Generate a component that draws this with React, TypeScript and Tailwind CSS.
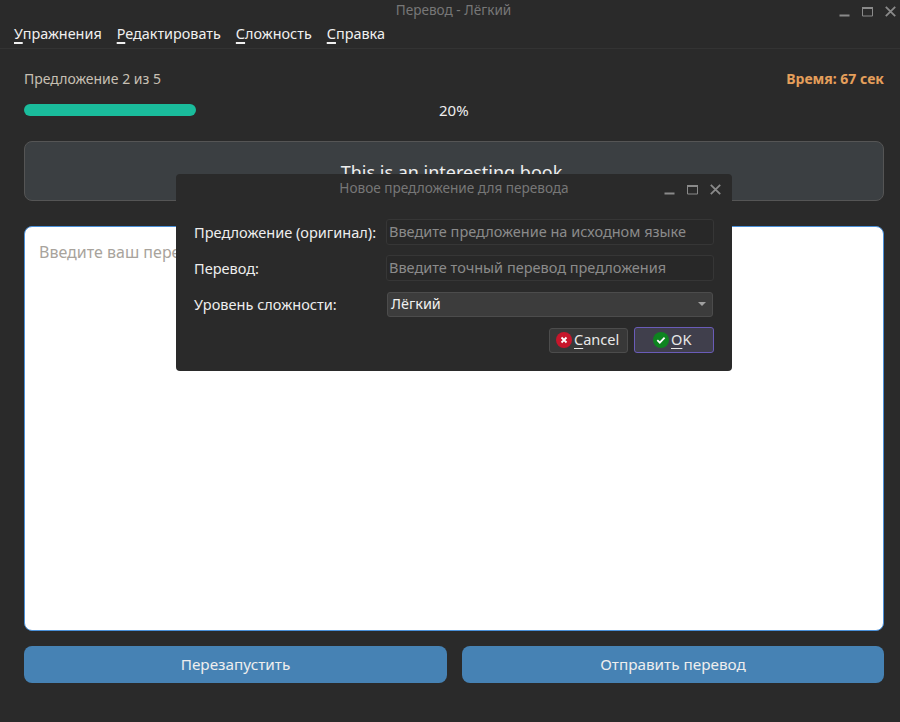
import React from "react";

function WinControls({ gap }: { gap: string }) {
  return (
    <div className={`flex items-center ${gap}`}>
      <svg width="11" height="11" viewBox="0 0 11 11" className="text-[#8a8a8a]"><rect x="0.5" y="8.5" width="10" height="2" fill="currentColor" /></svg>
      <svg width="11" height="11" viewBox="0 0 11 11" className="text-[#8a8a8a]"><path d="M0.5 1.5h10v8.5h-10z M0.5 1.5h10" fill="none" stroke="currentColor" strokeWidth="1" /><rect x="0" y="1" width="11" height="2" fill="currentColor" /></svg>
      <svg width="11" height="11" viewBox="0 0 11 11" className="text-[#8a8a8a]"><path d="M0.8 0.8L10.2 10.2M10.2 0.8L0.8 10.2" stroke="currentColor" strokeWidth="1.8" /></svg>
    </div>
  );
}

function U({ c, rest }: { c: string; rest: string }) {
  return (
    <span>
      <span className="underline decoration-1 underline-offset-[3px] [text-decoration-skip-ink:none]">{c}</span>
      {rest}
    </span>
  );
}

function MenuItem({ c, rest }: { c: string; rest: string }) {
  return (
    <span>
      <span className="underline decoration-2 underline-offset-[3px] [text-decoration-skip-ink:none]">{c}</span>
      {rest}
    </span>
  );
}

function DialogRow({ label, children }: { label: string; children: React.ReactNode }) {
  return (
    <div className="flex items-center h-[26px]">
      <div className="w-[192px] shrink-0 text-[14.55px] leading-[24px] text-[#eeeeee]">{label}</div>
      {children}
    </div>
  );
}

function Field({ placeholder }: { placeholder: string }) {
  return (
    <div className="w-[328px] h-[26px] flex items-center px-[2px] rounded-[3px] border border-[#363636] bg-[#282828] text-[14.5px] text-[#8b8b8b]">
      {placeholder}
    </div>
  );
}

export default function App() {
  return (
    <div className="relative w-[900px] h-[722px] overflow-hidden bg-[#2a2a2a] font-['Noto_Sans','Open_Sans',sans-serif] flex flex-col">
      <div className="relative h-[20px] flex items-center justify-center text-[13.6px] text-[#777777]">
        <span className="pl-[7px]">Перевод - Лёгкий</span>
        <div className="absolute right-[4px] top-[6px]">
          <WinControls gap="gap-[12px]" />
        </div>
      </div>
      <div className="h-[29px] flex items-center pl-[14px] gap-[15px] text-[14.4px] text-[#f0f0f0] border-b border-[#333333]">
        <MenuItem c="У" rest="пражнения" />
        <MenuItem c="Р" rest="едактировать" />
        <MenuItem c="С" rest="ложность" />
        <MenuItem c="С" rest="правка" />
      </div>
      <div className="flex-1 flex flex-col pl-[24px] pr-[16px]">
        <div className="flex items-center justify-between h-[20px] mt-[19px] mb-[1px] text-[14px]">
          <span className="text-[#c8c0b4]">Предложение 2 из 5</span>
          <span className="font-bold text-[#e59f5b]">Время: 67 сек</span>
        </div>
        <div className="relative h-[12px] mt-[15px]">
          <div className="h-[12px] w-[172px] rounded-[6px] bg-[#1abc9c]" />
          <div className="absolute left-[415px] top-[-3px] text-[15px] leading-[18px] text-[#eeeeee]">20%</div>
        </div>
        <div className="mt-[25px] h-[60px] rounded-[8px] border border-[#555555] bg-[#3b3f42] flex justify-center pt-[18px] pr-[5px] text-[18px] leading-[24px] text-[#eeeeee]">
          This is an interesting book
        </div>
        <div className="mt-[25px] h-[405px] rounded-[8px] border border-[#4a90d9] bg-white px-[14px] py-[13px] text-[16px] leading-[24px] text-[#a8a39c]">
          Введите ваш перевод
        </div>
        <div className="mt-[15px] flex gap-[15px]">
          <div className="w-[423px] h-[37px] rounded-[8px] bg-[#4682b4] flex items-center justify-center text-[15.3px] text-[#eeeeee]">Перезапустить</div>
          <div className="flex-1 h-[37px] rounded-[8px] bg-[#4682b4] flex items-center justify-center text-[15.3px] text-[#eeeeee]">Отправить перевод</div>
        </div>
      </div>

      <div className="absolute left-[176px] top-[174px] w-[556px] h-[197px] rounded-[4px] bg-[#2a2a2a] flex flex-col">
        <div className="relative h-[29px] flex items-center justify-center text-[13.6px] text-[#777777]">
          <span>Новое предложение для перевода</span>
          <div className="absolute left-[488px] top-[10px]">
            <WinControls gap="gap-[12px]" />
          </div>
        </div>
        <div className="flex flex-col gap-[10px] pl-[18px] pt-[16px]">
          <DialogRow label="Предложение (оригинал):"><Field placeholder="Введите предложение на исходном языке" /></DialogRow>
          <DialogRow label="Перевод:"><Field placeholder="Введите точный перевод предложения" /></DialogRow>
          <DialogRow label="Уровень сложности:">
            <div className="ml-[1px] w-[326px] h-[25px] flex items-center justify-between pl-[3px] pr-[6px] pb-[1px] rounded-[3px] border border-[#4c4c4c] bg-[#3c3c3c] text-[14.4px] text-[#f0f0f0]">
              <span>Лёгкий</span>
              <svg width="8" height="4" viewBox="0 0 8 4"><path d="M0 0h8L4 4z" fill="#a0a0a0" /></svg>
            </div>
          </DialogRow>
        </div>
        <div className="flex justify-end items-center gap-[6px] pr-[18px] mt-[10px]">
          <div className="w-[79px] h-[25px] flex items-center justify-start pl-[6px] gap-[2px] pb-[1px] rounded-[3px] border border-[#4c4c4c] bg-[#383838] text-[14.55px] text-[#e8e8e8]">
            <svg width="16" height="16" viewBox="0 0 16 16"><circle cx="8" cy="8" r="8" fill="#c7162b" /><path d="M5.5 5.5l5 5M10.5 5.5l-5 5" stroke="#fff" strokeWidth="1.8" /></svg>
            <U c="C" rest="ancel" />
          </div>
          <div className="w-[80px] h-[26px] flex items-center justify-start pl-[18px] gap-[2px] pb-[1px] rounded-[3px] border border-[#6a5cb8] bg-[#403f4c] text-[14.55px] text-[#e8e8e8]">
            <svg width="16" height="16" viewBox="0 0 16 16"><circle cx="8" cy="8" r="8" fill="#0e8420" /><path d="M4.3 8.2l2.5 2.5 4.8-5" fill="none" stroke="#fff" strokeWidth="1.8" /></svg>
            <U c="O" rest="K" />
          </div>
        </div>
      </div>
    </div>
  );
}
